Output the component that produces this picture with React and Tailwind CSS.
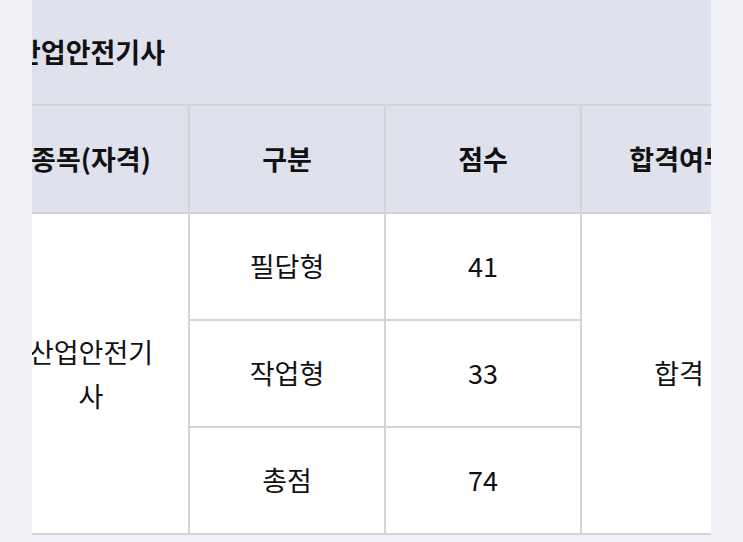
import React from 'react'

const rows = [
    {type: "필답형", score: "41"},
    {type: "작업형", score: "33"},
    {type: "총점", score: "74"},
]

export default function App() {
    return (
        <div
            className="w-full h-[542px] bg-[#f0f1f6] pl-[32px] overflow-hidden text-[#111111]"
            style={{fontFamily: '"Noto Sans CJK KR", "Noto Sans", sans-serif'}}
        >
            {/* scrolled table window */}
            <div className="w-[679px] overflow-hidden bg-white">
                <div className="w-[784px] -ml-[38px]">
                    <div className="h-[106px] bg-[#dfe2ed] border-b-2 border-[#d4d4d6] flex items-center pl-[22px] text-[27px] font-bold">
                        산업안전기사
                    </div>

                    <div className="grid grid-cols-4 grid-rows-[108px_107px_107px_107px] text-[27px]">
                        {/* header */}
                        {["종목(자격)", "구분", "점수", "합격여부"].map(head => (
                            <div
                                key={head}
                                className="bg-[#dfe2ed] border-b-2 border-r-2 border-[#d4d4d6] flex items-center justify-center font-bold"
                            >
                                {head}
                            </div>
                        ))}

                        <div className="row-span-3 col-start-1 row-start-2 border-b-2 border-r-2 border-[#d4d4d6] flex items-center justify-center text-center px-[24px] leading-[44px]">
                            산업안전기사
                        </div>

                        {rows.map((row, i) => (
                            <React.Fragment key={row.type}>
                                <div className={"col-start-2 border-b-2 border-r-2 border-[#d4d4d6] flex items-center justify-center " + ["row-start-2", "row-start-3", "row-start-4"][i]}>
                                    {row.type}
                                </div>
                                <div className={"col-start-3 border-b-2 border-r-2 border-[#d4d4d6] flex items-center justify-center " + ["row-start-2", "row-start-3", "row-start-4"][i]}>
                                    {row.score}
                                </div>
                            </React.Fragment>
                        ))}

                        <div className="row-span-3 col-start-4 row-start-2 border-b-2 border-r-2 border-[#d4d4d6] flex items-center justify-center">
                            합격
                        </div>
                    </div>
                </div>
            </div>
        </div>
    )
}
